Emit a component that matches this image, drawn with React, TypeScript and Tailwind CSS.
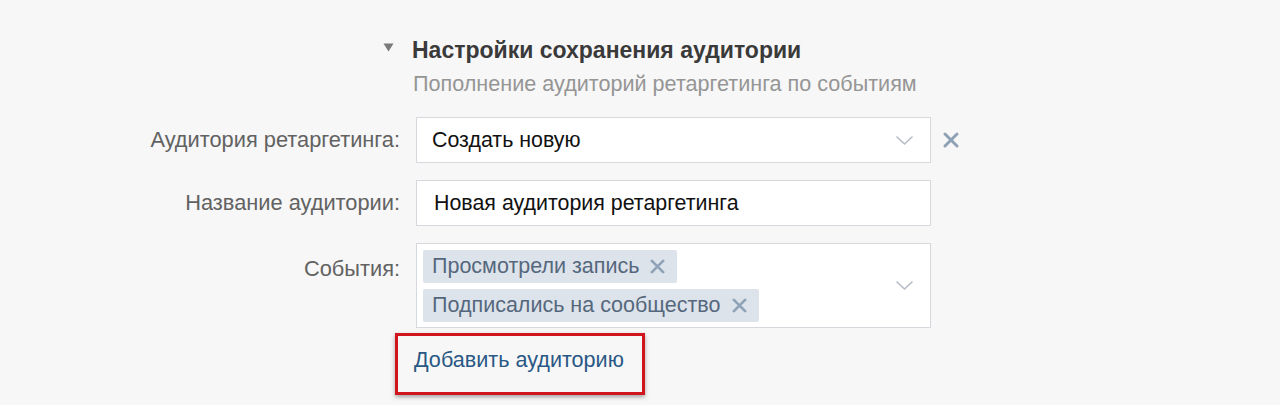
import React from "react";

const Chevron = () => (
  <svg width="17" height="9" viewBox="0 0 17 9" fill="none">
    <path d="M1 1 L8.5 8 L16 1" stroke="#b4bcc6" strokeWidth="1.6" strokeLinecap="round" strokeLinejoin="round" />
  </svg>
);

const Cross = ({ size = 15, color = "#8fa1b5", w = 2.6 }: { size?: number; color?: string; w?: number }) => (
  <svg width={size} height={size} viewBox="0 0 16 16" fill="none">
    <path d="M2 2 L14 14 M14 2 L2 14" stroke={color} strokeWidth={w} strokeLinecap="round" />
  </svg>
);

const Tag = ({ text }: { text: string }) => (
  <div className="flex items-center h-[33px] bg-[#dde3ea] rounded-[2px] pl-[9px] pr-[12px] gap-[11px] text-[21.5px] text-[#55677d]">
    <span>{text}</span>
    <Cross size={15} color="#8fa3b8" w={2.9} />
  </div>
);

export default function App() {
  return (
    <div
      className="w-full h-[405px] bg-[#f7f7f7] overflow-hidden"
      style={{ fontFamily: '"Liberation Sans", "Helvetica Neue", Arial, sans-serif' }}
    >
      <div className="pt-[36px] pl-[383px]">
        <div className="flex items-center">
          <svg width="11" height="9" viewBox="0 0 11 9" className="mt-[-6px]">
            <path d="M0.5 0.5 H10.5 L5.5 8.5 Z" fill="#7a7a7a" />
          </svg>
          <span className="ml-[18px] text-[23px] font-bold text-[#3a3a3a] leading-[28px]">
            Настройки сохранения аудитории
          </span>
        </div>
        <div className="ml-[30px] mt-[6px] text-[21.6px] text-[#959595] leading-[28px]">
          Пополнение аудиторий ретаргетинга по событиям
        </div>
      </div>

      <div className="mt-[19px] flex flex-col gap-[17px]">
        <div className="flex items-center">
          <div className="w-[400px] text-right text-[21.8px] text-[#626262]">Аудитория ретаргетинга:</div>
          <div className="ml-[16px] w-[515px] h-[46px] bg-white border border-[#d5d9de] flex items-center justify-between pl-[15px] pr-[17px]">
            <span className="text-[21.4px] text-[#111]">Создать новую</span>
            <Chevron />
          </div>
          <div className="ml-[12px]">
            <Cross size={16} w={2.9} />
          </div>
        </div>

        <div className="flex items-center">
          <div className="w-[400px] text-right text-[21.8px] text-[#626262]">Название аудитории:</div>
          <div className="ml-[16px] w-[515px] h-[46px] bg-white border border-[#d5d9de] flex items-center pl-[17px]">
            <span className="text-[21.4px] text-[#111]">Новая аудитория ретаргетинга</span>
          </div>
        </div>

        <div className="flex items-start">
          <div className="w-[400px] text-right text-[21.8px] text-[#626262] pt-[10px]">События:</div>
          <div className="ml-[16px] w-[515px] h-[85px] bg-white border border-[#d5d9de] flex items-center justify-between pl-[6px] pr-[17px]">
            <div className="flex flex-col items-start gap-[6px]">
              <Tag text="Просмотрели запись" />
              <Tag text="Подписались на сообщество" />
            </div>
            <Chevron />
          </div>
        </div>
      </div>

      <div className="ml-[395px] mt-[5px] w-[250px] h-[62px] border-[3px] border-[#d0151d] shadow-[0_2px_4px_rgba(0,0,0,0.35)] pl-[16px] pt-[8px]">
        <span className="text-[21.6px] text-[#2a5885]">Добавить аудиторию</span>
      </div>
    </div>
  );
}
